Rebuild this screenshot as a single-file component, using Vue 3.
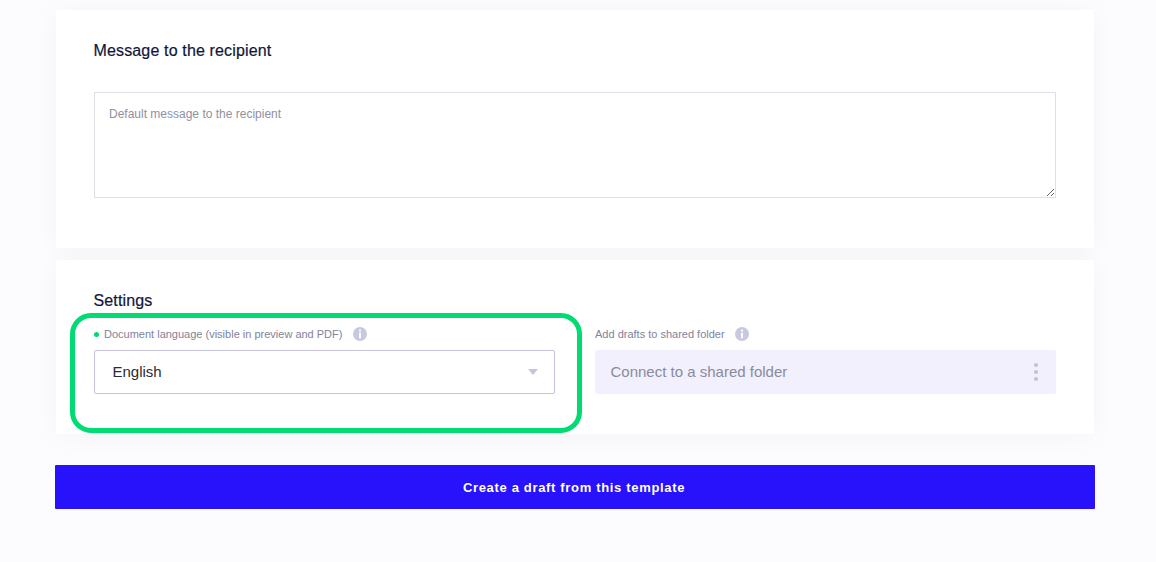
<script setup>
const infoPath = 'M7 0a7 7 0 1 0 0 14A7 7 0 0 0 7 0z';
</script>

<template>
  <main class="page">
    <section class="card message">
      <h2 class="title">Message to the recipient</h2>
      <textarea class="area" placeholder="Default message to the recipient"></textarea>
    </section>

    <section class="card settings">
      <h2 class="title settings-title">Settings</h2>
      <div class="fields">
        <div class="field">
          <div class="label">
            <span class="dot"></span>
            <span>Document language (visible in preview and PDF)</span>
            <svg class="info" viewBox="0 0 14 14">
              <path :d="infoPath" fill="#c9c8e3" />
              <circle cx="7" cy="3.7" r="1.1" fill="#fff" />
              <rect x="6" y="5.7" width="2" height="5.6" rx=".4" fill="#fff" />
            </svg>
          </div>
          <div class="select">
            <span class="value">English</span>
            <span class="caret"></span>
          </div>
        </div>
        <div class="field">
          <div class="label">
            <span>Add drafts to shared folder</span>
            <svg class="info wide" viewBox="0 0 14 14">
              <path :d="infoPath" fill="#c9c8e3" />
              <circle cx="7" cy="3.7" r="1.1" fill="#fff" />
              <rect x="6" y="5.7" width="2" height="5.6" rx=".4" fill="#fff" />
            </svg>
          </div>
          <div class="folder">
            <span class="value">Connect to a shared folder</span>
            <span class="dots"><i></i><i></i><i></i></span>
          </div>
        </div>
      </div>
      <div class="highlight"></div>
    </section>

    <button class="cta" type="button">Create a draft from this template</button>
  </main>
</template>

<style>
html, body { margin: 0; background: #fcfcff; }
</style>

<style scoped>
.page {
  width: 1156px;
  height: 562px;
  box-sizing: border-box;
  padding: 10px 62px 0 56px;
  overflow: hidden;
  font-family: "Liberation Sans", Arial, sans-serif;
  display: flex;
  flex-direction: column;
  background: #fcfcff;
}
.card {
  background: #fff;
  box-shadow: 0 2px 24px rgba(30, 30, 60, 0.035);
  box-sizing: border-box;
  padding: 0 38px;
  width: 1038px;
}
.message { height: 238px; padding-top: 32px; }
.settings { height: 174px; margin-top: 12px; padding-top: 32px; position: relative; }
.title {
  margin: 0 0 0 -0.5px;
  font-size: 16px;
  line-height: 18px;
  font-weight: 400;
  letter-spacing: 0.15px;
  color: #10163a;
  -webkit-text-stroke: 0.2px #10163a;
}
.area {
  display: block;
  width: 962px;
  height: 106px;
  margin-top: 32px;
  box-sizing: border-box;
  padding: 13px 14px;
  border: 1px solid #e0dfe8;
  border-radius: 0;
  outline: none;
  font: 12px/16px "Liberation Sans", Arial, sans-serif;
  color: #8f8fa3;
}
.area::placeholder { color: #8f8fa3; opacity: 1; }
.fields { display: flex; gap: 40px; margin-top: 9px; }
.field { width: 461px; }
.label {
  height: 26px;
  margin-top: 2px;
  display: flex;
  align-items: center;
  font-size: 11px;
  color: #82829a;
}
.dot {
  width: 5px;
  height: 5px;
  border-radius: 50%;
  background: #00d775;
  margin-right: 5px;
}
.info { width: 14px; height: 14px; margin-left: 11px; }
.info.wide { margin-left: 10px; }
.select, .folder {
  height: 44px;
  box-sizing: border-box;
  display: flex;
  align-items: center;
  justify-content: space-between;
  margin-top: 3px;
}
.value { margin-bottom: 2px; }
.select {
  border: 1px solid #c4c1df;
  border-radius: 2px;
  padding: 0 16px 0 17.5px;
  font-size: 15px;
  color: #2b2b33;
}
.caret {
  width: 0;
  height: 0;
  border-left: 5.5px solid transparent;
  border-right: 5.5px solid transparent;
  border-top: 6px solid #c6c4de;
}
.folder {
  background: #f2f0fd;
  border-radius: 2px;
  padding: 0 18px 0 15.5px;
  font-size: 15px;
  color: #8a8a9c;
}
.dots { display: flex; flex-direction: column; gap: 3px; }
.dots i {
  display: block;
  width: 4px;
  height: 4px;
  border-radius: 50%;
  background: #c3c2cf;
}
.highlight {
  position: absolute;
  left: 14px;
  top: 53px;
  width: 512px;
  height: 120px;
  box-sizing: border-box;
  border: 5px solid #00dc73;
  border-radius: 21px;
  pointer-events: none;
}
.cta {
  width: 1040px;
  height: 44px;
  margin: 31px 0 0 -1px;
  padding: 0 2px 0 0;
  border: 0;
  border-radius: 1px;
  background: #2811fb;
  color: #fff;
  font: 700 13px "Liberation Sans", Arial, sans-serif;
  letter-spacing: 0.67px;
}
</style>
